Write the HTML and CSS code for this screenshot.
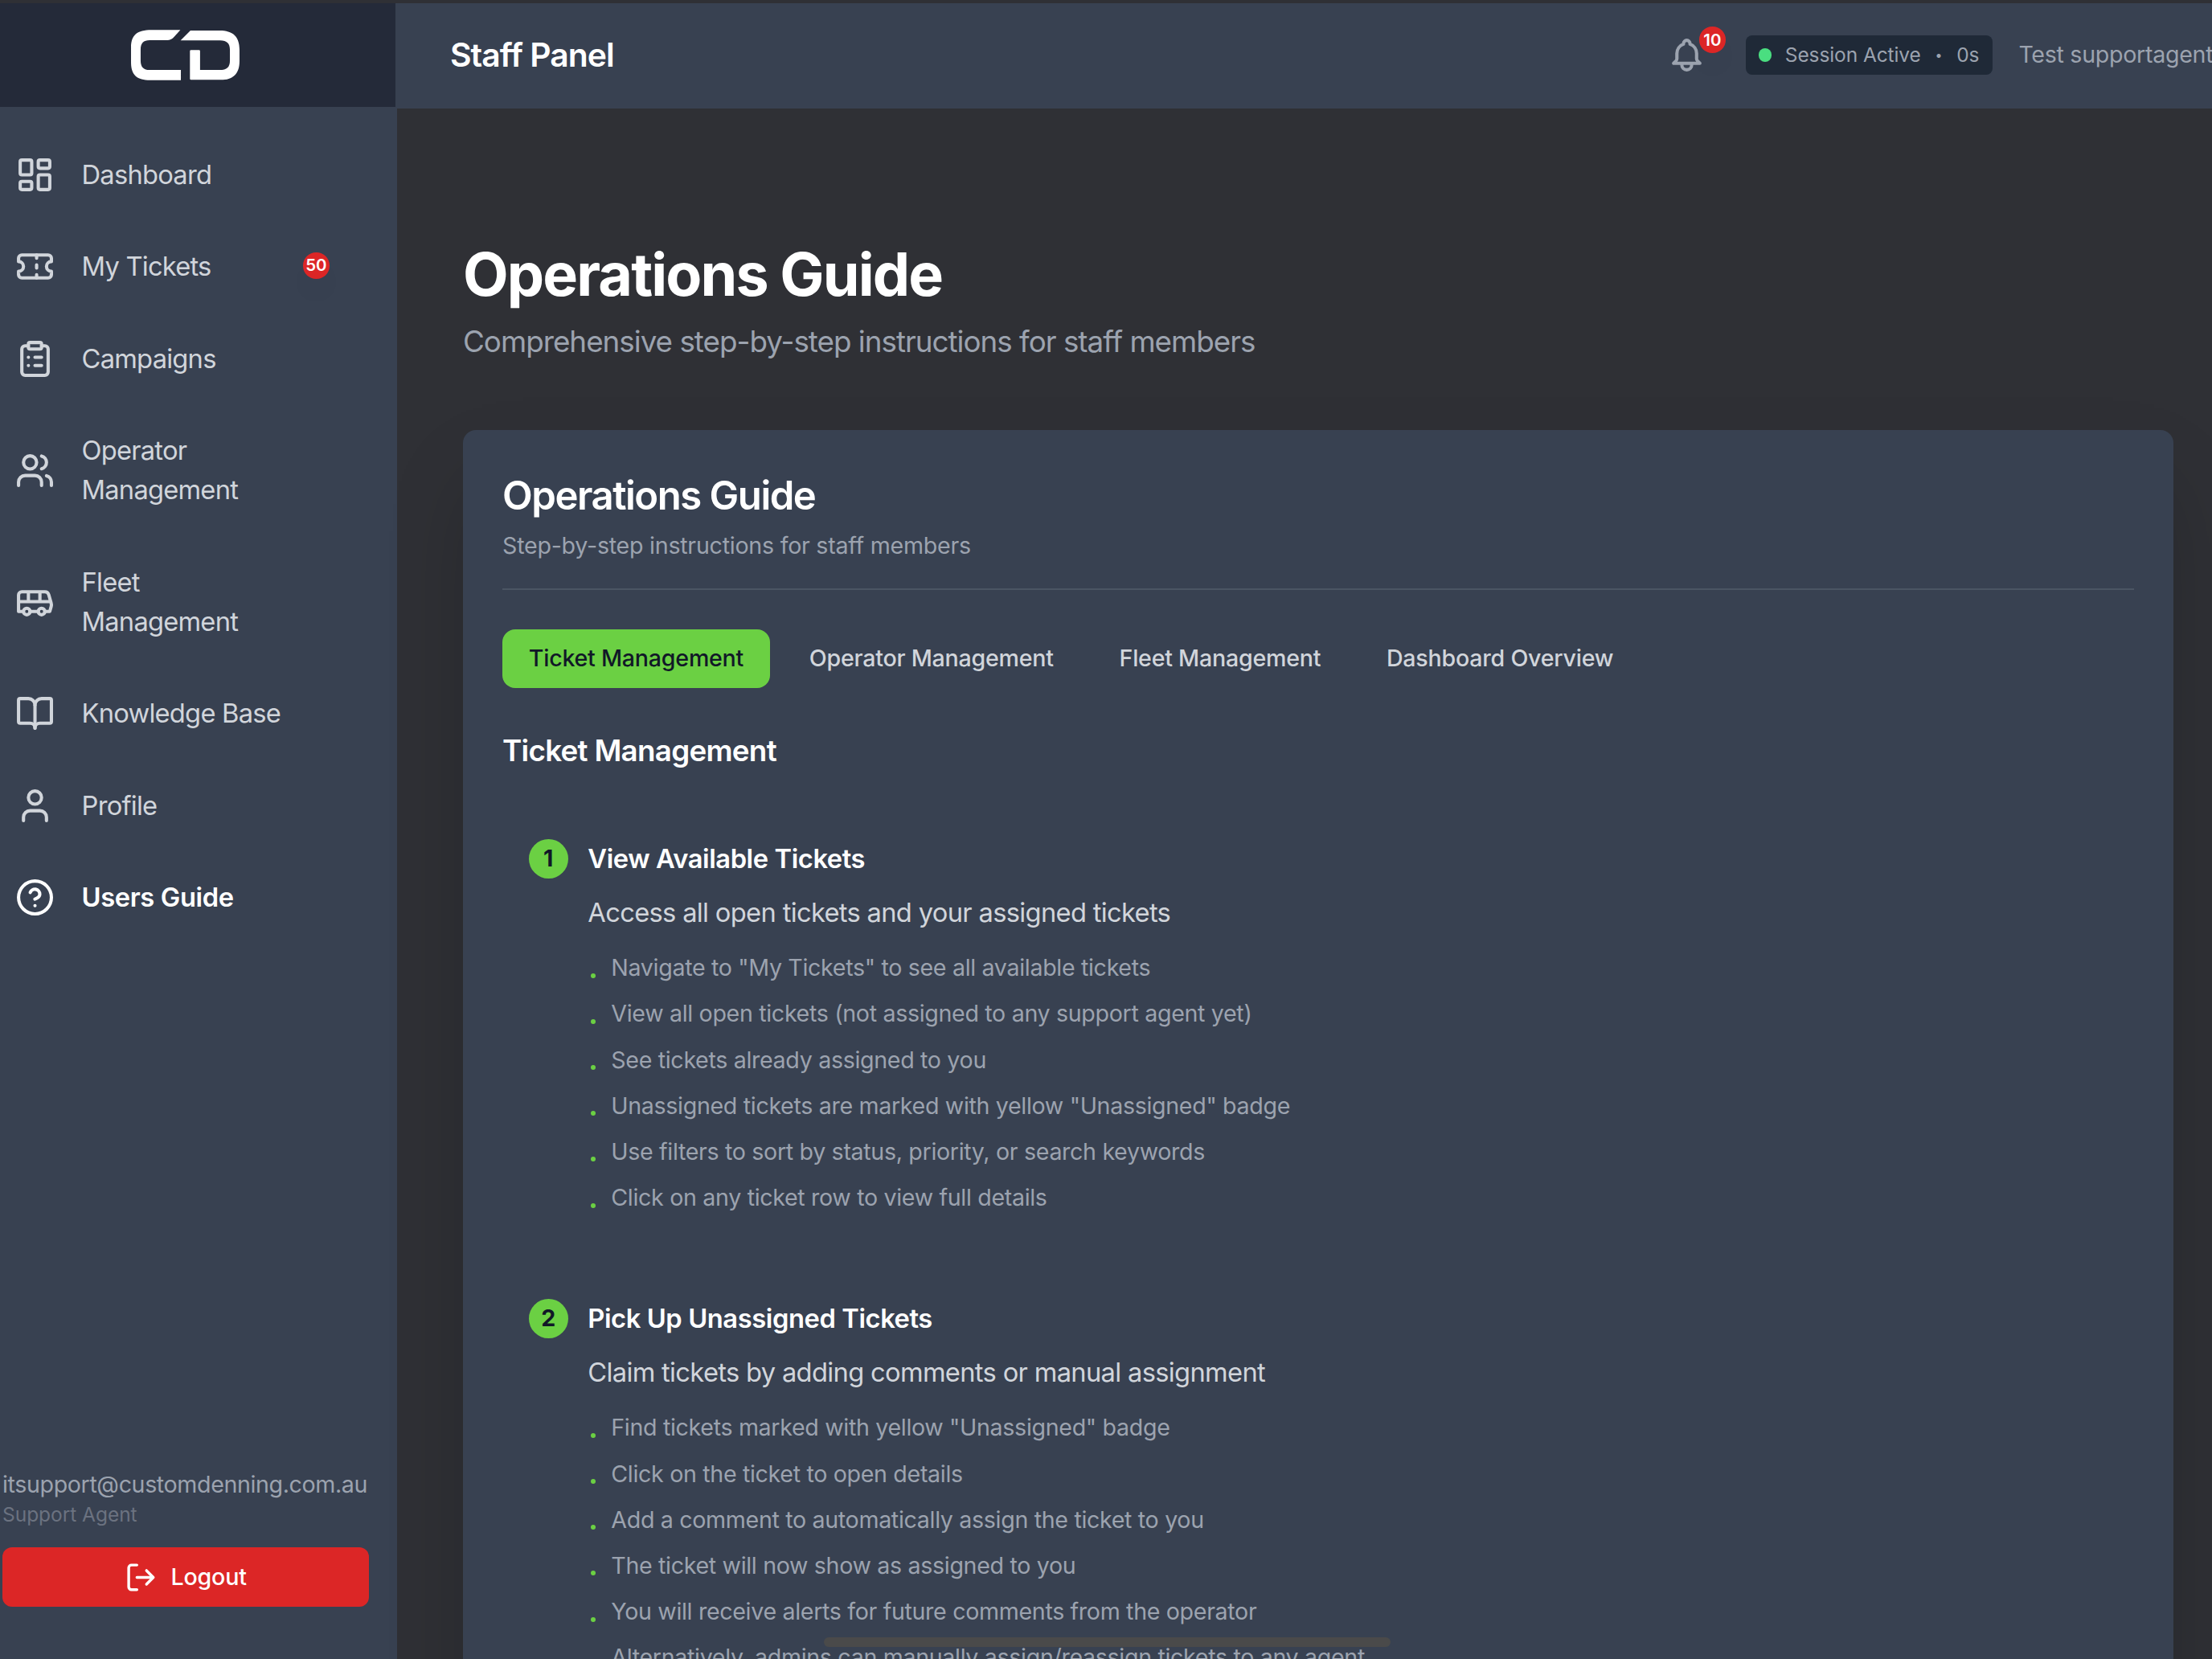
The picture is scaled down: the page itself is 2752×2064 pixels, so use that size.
FILE: index.html
```html
<!DOCTYPE html>
<html lang="en">
<head>
<meta charset="utf-8">
<title>Staff Panel</title>
<link rel="stylesheet" href="styles.css">
</head>
<body>
<div class="app">
  <aside class="sidebar">
    <div class="brand">
      <svg class="brand-logo" viewBox="486 110 411 190" aria-label="CD">
        <path d="M673 111H565C510 111 489 130 488 175V235C489 280 510 299 560 299H675V261H558C535 261 524 250 524 225V185C524 160 535 149 558 149H625C642 149 645 142 673 111Z"/>
        <path d="M711 113H820C870 113 895 135 895 185V228C895 275 870 298 825 298H713Q709 298 709 294V190Q709 186 713 186H743Q747 186 747 190V261H820C848 261 859 250 859 225V185C859 162 848 150 822 150H674Z"/>
      </svg>
    </div>
    <nav class="nav">
      <a class="nav-item"><svg class="icon" viewBox="0 0 24 24"><rect x="3" y="3" width="7" height="9" rx="1"/><rect x="14" y="3" width="7" height="5" rx="1"/><rect x="14" y="12" width="7" height="9" rx="1"/><rect x="3" y="16" width="7" height="5" rx="1"/></svg><span>Dashboard</span></a>
      <a class="nav-item"><svg class="icon" viewBox="0 0 24 24"><path d="M2 9a3 3 0 0 1 0 6v2a2 2 0 0 0 2 2h16a2 2 0 0 0 2-2v-2a3 3 0 0 1 0-6V7a2 2 0 0 0-2-2H4a2 2 0 0 0-2 2Z"/><path d="M13 5v2M13 17v2M13 11v2"/></svg><span>My Tickets</span><span class="badge nav-badge">50</span></a>
      <a class="nav-item"><svg class="icon" viewBox="0 0 24 24"><rect x="8" y="2" width="8" height="4" rx="1"/><path d="M16 4h2a2 2 0 0 1 2 2v14a2 2 0 0 1-2 2H6a2 2 0 0 1-2-2V6a2 2 0 0 1 2-2h2M12 11h4M12 16h4M8 11h.01M8 16h.01"/></svg><span>Campaigns</span></a>
      <a class="nav-item"><svg class="icon" viewBox="0 0 24 24"><path d="M16 21v-2a4 4 0 0 0-4-4H6a4 4 0 0 0-4 4v2"/><circle cx="9" cy="7" r="4"/><path d="M22 21v-2a4 4 0 0 0-3-3.87M16 3.13a4 4 0 0 1 0 7.75"/></svg><span>Operator<br>Management</span></a>
      <a class="nav-item"><svg class="icon" viewBox="0 0 24 24"><path d="M8 6v6M15 6v6M2 12h19.6M18 18h3s.5-1.7.8-2.8c.1-.4.2-.8.2-1.2 0-.4-.1-.8-.2-1.2l-1.4-5C20.1 6.8 19.1 6 18 6H4a2 2 0 0 0-2 2v10h3"/><circle cx="7" cy="18" r="2"/><path d="M9 18h5"/><circle cx="16" cy="18" r="2"/></svg><span>Fleet<br>Management</span></a>
      <a class="nav-item"><svg class="icon" viewBox="0 0 24 24"><path d="M12 7v14"/><path d="M3 18a1 1 0 0 1-1-1V4a1 1 0 0 1 1-1h5a4 4 0 0 1 4 4 4 4 0 0 1 4-4h5a1 1 0 0 1 1 1v13a1 1 0 0 1-1 1h-6a3 3 0 0 0-3 3 3 3 0 0 0-3-3z"/></svg><span>Knowledge Base</span></a>
      <a class="nav-item"><svg class="icon" viewBox="0 0 24 24"><path d="M19 21v-2a4 4 0 0 0-4-4H9a4 4 0 0 0-4 4v2"/><circle cx="12" cy="7" r="4"/></svg><span>Profile</span></a>
      <a class="nav-item active"><svg class="icon" viewBox="0 0 24 24"><circle cx="12" cy="12" r="10"/><path d="M9.09 9a3 3 0 0 1 5.83 1c0 2-3 3-3 3M12 17h.01"/></svg><span>Users Guide</span></a>
    </nav>
    <div class="account">
      <div class="email">itsupport@customdenning.com.au</div>
      <div class="role">Support Agent</div>
      <button class="logout"><svg class="icon icon-sm" viewBox="0 0 24 24"><path d="M9 21H5a2 2 0 0 1-2-2V5a2 2 0 0 1 2-2h4M16 17l5-5-5-5M21 12H9"/></svg><span>Logout</span></button>
    </div>
  </aside>
  <div class="main">
    <header class="topbar">
      <div class="panel-title">Staff Panel</div>
      <div class="tools">
        <div class="bell">
          <svg class="icon" viewBox="0 0 24 24"><path d="M15 17h5l-1.405-1.405A2.032 2.032 0 0118 14.158V11a6.002 6.002 0 00-4-5.659V5a2 2 0 10-4 0v.341C7.67 6.165 6 8.388 6 11v3.159c0 .538-.214 1.055-.595 1.436L4 17h5m6 0v1a3 3 0 11-6 0v-1m6 0H9"/></svg>
          <span class="badge bell-badge">10</span>
        </div>
        <div class="session"><i class="status-dot"></i><span class="session-label">Session Active</span><span class="separator">•</span><span>0s</span></div>
        <div class="user-name">Test supportagent</div>
      </div>
    </header>
    <main class="content">
      <h1>Operations Guide</h1>
      <p class="lead">Comprehensive step-by-step instructions for staff members</p>
      <section class="card">
        <div class="card-head">
          <h2>Operations Guide</h2>
          <p>Step-by-step instructions for staff members</p>
        </div>
        <div class="tabs">
          <button class="tab selected">Ticket Management</button>
          <button class="tab">Operator Management</button>
          <button class="tab">Fleet Management</button>
          <button class="tab">Dashboard Overview</button>
        </div>
        <h3>Ticket Management</h3>
        <div class="steps">
          <article class="step">
            <div class="step-number">1</div>
            <div class="step-body">
              <h4>View Available Tickets</h4>
              <p>Access all open tickets and your assigned tickets</p>
              <ul>
                <li>Navigate to "My Tickets" to see all available tickets</li>
                <li>View all open tickets (not assigned to any support agent yet)</li>
                <li>See tickets already assigned to you</li>
                <li>Unassigned tickets are marked with yellow "Unassigned" badge</li>
                <li>Use filters to sort by status, priority, or search keywords</li>
                <li>Click on any ticket row to view full details</li>
              </ul>
            </div>
          </article>
          <article class="step">
            <div class="step-number">2</div>
            <div class="step-body">
              <h4>Pick Up Unassigned Tickets</h4>
              <p>Claim tickets by adding comments or manual assignment</p>
              <ul>
                <li>Find tickets marked with yellow "Unassigned" badge</li>
                <li>Click on the ticket to open details</li>
                <li>Add a comment to automatically assign the ticket to you</li>
                <li>The ticket will now show as assigned to you</li>
                <li>You will receive alerts for future comments from the operator</li>
                <li>Alternatively, admins can manually assign/reassign tickets to any agent</li>
              </ul>
            </div>
          </article>
        </div>
      </section>
    </main>
  </div>
  <div class="home-indicator"></div>
</div>
</body>
</html>
```

FILE: styles.css
```css
* { box-sizing: border-box; margin: 0; padding: 0; }
html { font-size: 32.7px; }
body {
  width: 2752px;
  height: 2064px;
  overflow: hidden;
  background: #2f3035;
  color: #fff;
  font-family: Inter, "Liberation Sans", sans-serif;
  font-size: 1rem;
  line-height: 1.5;
}
button { border: 0; background: none; color: inherit; font: inherit; letter-spacing: inherit; }
.app { position: relative; display: flex; height: 2064px; padding-top: 4px; overflow: hidden; }
.icon {
  flex: none;
  width: 1.5rem;
  height: 1.5rem;
  fill: none;
  stroke: currentColor;
  stroke-width: 2;
  stroke-linecap: round;
  stroke-linejoin: round;
}
.icon-sm { width: 1.25rem; height: 1.25rem; }
.badge {
  display: flex;
  align-items: center;
  justify-content: center;
  width: 1rem;
  height: 1rem;
  border-radius: 50%;
  background: #dc2626;
  color: #fff;
  font-size: 0.625rem;
  font-weight: 600;
  letter-spacing: 0;
  line-height: 1;
  box-shadow: 0 20px 30px -6px rgba(0, 0, 0, .06);
}

/* Sidebar */
.sidebar { display: flex; flex-direction: column; flex: none; width: 494px; background: #384151; }
.brand { display: flex; align-items: center; justify-content: center; width: 492px; height: 129px; background: #242a39; padding-right: 31px; }
.brand-logo { width: 137px; height: 63px; fill: #fff; }
.nav { display: flex; flex-direction: column; gap: 0.5rem; padding: 35.5px 19px 0; color: #d1d5db; letter-spacing: -0.78px; }
.nav-item { position: relative; display: flex; align-items: center; gap: 33.5px; padding: 0.75rem 0; }
.nav-item.active { color: #fff; font-weight: 600; letter-spacing: -0.38px; }
.nav-badge { position: absolute; left: 358px; top: 31px; }
.account { margin-top: auto; padding: 0 35px 65px 3px; }
.email { color: #9ca3af; font-size: 0.875rem; letter-spacing: -0.38px; line-height: 1.25rem; white-space: nowrap; }
.role { color: #6b7280; font-size: 0.75rem; letter-spacing: -0.05px; line-height: 1rem; }
.logout {
  display: flex;
  align-items: center;
  justify-content: center;
  gap: 0.5rem;
  width: 456px;
  height: 2.25rem;
  margin-top: 0.75rem;
  border-radius: 12px;
  background: #dc2626;
  font-size: 0.875rem;
  font-weight: 500;
  letter-spacing: -0.2px;
}

/* Top bar */
.main { flex: 1; min-width: 0; }
.topbar {
  display: flex;
  align-items: center;
  justify-content: space-between;
  height: 131px;
  margin-left: -2px;
  padding: 0 0 2px 68px;
  background: #384151;
}
.panel-title { font-size: 1.25rem; font-weight: 600; letter-spacing: -0.96px; line-height: 1.75rem; }
.tools { display: flex; align-items: center; flex: none; width: 678px; white-space: nowrap; }
.bell { position: relative; display: flex; flex: none; margin-right: 48.7px; color: #9ca3af; }
.bell .icon { margin-top: 1px; }
.bell-badge { position: absolute; left: 40px; top: -10px; }
.session {
  display: flex;
  align-items: center;
  flex: none;
  gap: 0.5rem;
  width: 307px;
  height: 1.5rem;
  margin-right: 1rem;
  padding: 0 0.5rem;
  border-radius: 8px;
  background: #1f2937;
  color: #9ca3af;
  font-size: 0.75rem;
  letter-spacing: -0.1px;
}
.status-dot { flex: none; width: 0.5rem; height: 0.5rem; border-radius: 50%; background: #4ade80; }
.separator { width: 13px; font-size: 16px; text-align: center; }
.user-name { color: #9ca3af; font-size: 0.875rem; letter-spacing: -0.3px; }

/* Page content */
.content { padding: 165.6px 48px 0 82px; }
h1 { font-size: 2.25rem; font-weight: 700; letter-spacing: -1.87px; line-height: 2.5rem; }
.lead { margin-top: 14px; color: #9ca3af; font-size: 1.125rem; letter-spacing: -0.985px; line-height: 1.75rem; }
.card {
  margin-top: 2.5rem;
  padding: 1.5rem;
  border-radius: 16px;
  background: #384151;
  box-shadow: 0 51px 102px -24px rgba(0, 0, 0, .25);
}
.card-head { padding-bottom: 31.2px; border-bottom: 2px solid #4b5563; }
h2 { font-size: 1.5rem; font-weight: 600; letter-spacing: -1.48px; line-height: 2rem; }
.card-head p { margin-top: 9.7px; color: #9ca3af; font-size: 0.875rem; letter-spacing: -0.25px; line-height: 1.25rem; }
.tabs { display: flex; gap: 0.5rem; margin-top: 1.5rem; }
.tab {
  padding: 0.5rem 1rem;
  border-radius: 16px;
  color: #d1d5db;
  font-size: 0.875rem;
  font-weight: 500;
  letter-spacing: -0.24px;
  line-height: 1.25rem;
  white-space: nowrap;
}
.tab.selected { background: #6bd043; color: #111827; }
h3 { margin-top: 1.5rem; font-size: 1.125rem; font-weight: 600; letter-spacing: -0.72px; line-height: 1.75rem; }
.steps { display: flex; flex-direction: column; gap: 1.25rem; margin-top: 1.5rem; }
.step { display: flex; gap: 0.75rem; padding: 1rem; }
.step-number {
  display: flex;
  align-items: center;
  justify-content: center;
  flex: none;
  width: 1.5rem;
  height: 1.5rem;
  border-radius: 50%;
  background: #6bd043;
  color: #111827;
  font-size: 0.875rem;
  font-weight: 700;
}
h4 { font-size: 1rem; font-weight: 600; letter-spacing: -0.42px; line-height: 1.5rem; }
.step-body p { margin-top: 17.4px; color: #d1d5db; letter-spacing: -0.68px; }
ul { display: flex; flex-direction: column; gap: 0.5rem; margin-top: 23.5px; list-style: none; }
li {
  display: flex;
  align-items: center;
  gap: 19px;
  height: 1.25rem;
  padding: 2px 0 0 4px;
  color: #9ca3af;
  font-size: 0.875rem;
  letter-spacing: -0.33px;
  line-height: 1.25rem;
}
li::before { content: ""; width: 6px; height: 6px; margin-top: 18px; border-radius: 50%; background: #6bd043; }
.home-indicator { position: absolute; left: 1025px; top: 2037px; width: 705px; height: 12px; border-radius: 6px; background: #4a4a4a; }
```
